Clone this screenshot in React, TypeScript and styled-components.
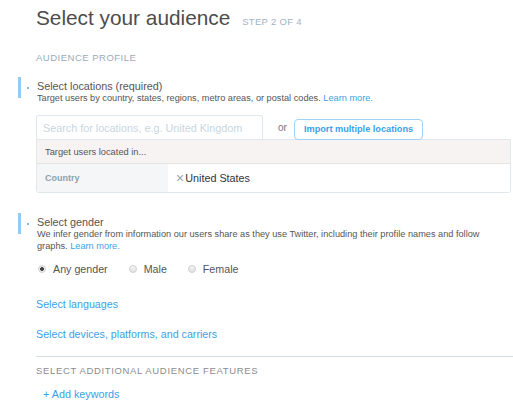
import React from "react";
import styled, { createGlobalStyle } from "styled-components";

const GlobalStyle = createGlobalStyle`
  html, body {
    margin: 0;
    padding: 0;
    background: #ffffff;
  }
  body {
    font-family: "Liberation Sans", Arial, sans-serif;
    color: #555555;
  }
`;

const BLUE = "#3b9fe8";

const App = () => {
  return (
    <>
      <GlobalStyle />
      <S.Page>
        <S.Header>
          <S.Title>Select your audience</S.Title>
          <S.Step>Step 2 of 4</S.Step>
        </S.Header>

        <S.GroupLabel $tone="blue">Audience profile</S.GroupLabel>

        <S.SectionHead>
          <S.Bar />
          <S.Bullet />
          <S.HeadText>
            <S.HeadTitle>Select locations (required)</S.HeadTitle>
            <S.HeadDesc>
              Target users by country, states, regions, metro areas, or postal codes.{" "}
              <S.InlineLink href="#">Learn more.</S.InlineLink>
            </S.HeadDesc>
          </S.HeadText>
        </S.SectionHead>

        <S.LocationBlock>
          <S.SearchRow>
            <S.SearchInput placeholder="Search for locations, e.g. United Kingdom" />
            <S.Or>or</S.Or>
            <S.ImportButton>Import multiple locations</S.ImportButton>
          </S.SearchRow>
          <S.Table>
            <S.TableCaption>Target users located in...</S.TableCaption>
            <S.TableRow>
              <S.KeyCell>Country</S.KeyCell>
              <S.ValueCell>
                <S.Remove>×</S.Remove>
                United States
              </S.ValueCell>
            </S.TableRow>
          </S.Table>
        </S.LocationBlock>

        <S.SectionHead $gap={20}>
          <S.Bar />
          <S.Bullet />
          <S.HeadText>
            <S.HeadTitle>Select gender</S.HeadTitle>
            <S.HeadDesc>
              We infer gender from information our users share as they use Twitter, including
              their profile names and follow graphs.{" "}
              <S.InlineLink href="#">Learn more.</S.InlineLink>
            </S.HeadDesc>
          </S.HeadText>
        </S.SectionHead>

        <S.RadioRow>
          {["Any gender", "Male", "Female"].map((label, i) => (
            <S.RadioItem key={label}>
              <S.RadioDot $checked={i === 0} />
              {label}
            </S.RadioItem>
          ))}
        </S.RadioRow>

        <S.TextLink href="#" $gap={21}>Select languages</S.TextLink>
        <S.TextLink href="#" $gap={16}>Select devices, platforms, and carriers</S.TextLink>

        <S.Rule />

        <S.GroupLabel $tone="gray" $gap={8}>Select additional audience features</S.GroupLabel>
        <S.AddLink href="#">+ Add keywords</S.AddLink>
      </S.Page>
    </>
  );
};

export default App;

const S = {
  Page: styled.div`
    width: 513px;
    height: 416px;
    overflow: hidden;
    padding-top: 6px;
    box-sizing: border-box;
  `,
  Header: styled.div`
    display: flex;
    align-items: baseline;
    padding-left: 36px;
    height: 24px;
  `,
  Title: styled.h1`
    margin: 0;
    font-size: 20.8px;
    line-height: 24px;
    font-weight: normal;
    color: #4d4d4d;
  `,
  Step: styled.span`
    margin-left: 12px;
    font-size: 9.5px;
    text-transform: uppercase;
    letter-spacing: 0.3px;
    color: #9fb3c2;
  `,
  GroupLabel: styled.div<{ $tone: "blue" | "gray"; $gap?: number }>`
    margin-top: ${(p) => (p.$gap ?? 22)}px;
    padding-left: 36px;
    font-size: 9.5px;
    line-height: 12px;
    text-transform: uppercase;
    letter-spacing: ${(p) => (p.$tone === "blue" ? 0.5 : 0.65)}px;
    color: ${(p) => (p.$tone === "blue" ? "#9aabb8" : "#8c8c8c")};
  `,
  SectionHead: styled.div<{ $gap?: number }>`
    display: flex;
    align-items: flex-start;
    margin-top: ${(p) => (p.$gap ?? 13)}px;
  `,
  Bar: styled.div`
    margin-left: 18px;
    width: 3px;
    height: 21px;
    background: #8fcdf5;
    flex: none;
  `,
  Bullet: styled.div`
    width: 16px;
    height: 21px;
    flex: none;
    display: flex;
    align-items: center;
    &::after {
      content: "";
      margin-left: 6px;
      width: 2px;
      height: 2px;
      background: #7fbfea;
    }
  `,
  HeadText: styled.div`
    padding-top: 3px;
    width: 468px;
  `,
  HeadTitle: styled.div`
    font-size: 10.8px;
    line-height: 12px;
    color: #555555;
  `,
  HeadDesc: styled.div`
    font-size: 9.2px;
    line-height: 12px;
    color: #555555;
  `,
  InlineLink: styled.a`
    color: ${BLUE};
    text-decoration: none;
  `,
  LocationBlock: styled.div`
    margin: 11px 2px 0 36px;
  `,
  SearchRow: styled.div`
    display: flex;
    align-items: center;
    height: 24px;
  `,
  SearchInput: styled.input`
    box-sizing: border-box;
    width: 227px;
    height: 24px;
    margin: 0;
    border: 1px solid #e1e8ed;
    border-bottom: none;
    border-radius: 3px 3px 0 0;
    padding: 0 6px;
    font-family: inherit;
    font-size: 10.8px;
    color: #555555;
    outline: none;
    &::placeholder {
      color: #c8d6e0;
    }
  `,
  Or: styled.span`
    margin: 0 7px 0 15px;
    font-size: 10px;
    color: #777777;
  `,
  ImportButton: styled.button`
    box-sizing: border-box;
    height: 21px;
    margin-top: 4px;
    padding: 0 9px;
    border: 1px solid #9fd3f6;
    border-radius: 4px;
    background: #ffffff;
    font-family: inherit;
    font-size: 9.2px;
    font-weight: bold;
    color: ${BLUE};
  `,
  Table: styled.div`
    border: 1px solid #e1e8ed;
    border-radius: 0 0 3px 3px;
  `,
  TableCaption: styled.div`
    height: 23px;
    display: flex;
    align-items: center;
    padding-left: 8px;
    background: #f7f3f2;
    border-bottom: 1px solid #e3e3e3;
    font-size: 9.3px;
    color: #555555;
  `,
  TableRow: styled.div`
    display: flex;
    height: 28px;
  `,
  KeyCell: styled.div`
    width: 131px;
    display: flex;
    align-items: center;
    padding-left: 8px;
    box-sizing: border-box;
    background: #f5f6f7;
    font-size: 9px;
    font-weight: bold;
    color: #8ea0ae;
  `,
  ValueCell: styled.div`
    flex: 1;
    display: flex;
    align-items: center;
    padding-left: 8px;
    font-size: 10.8px;
    color: #333333;
    background: #ffffff;
  `,
  Remove: styled.span`
    margin-right: 1px;
    font-size: 14px;
    color: #9aa6b0;
  `,
  RadioRow: styled.div`
    display: flex;
    align-items: center;
    margin-top: 10px;
    padding-left: 38px;
    height: 14px;
  `,
  RadioItem: styled.label`
    display: flex;
    align-items: center;
    margin-right: 21px;
    font-size: 10.7px;
    color: #555555;
  `,
  RadioDot: styled.span<{ $checked?: boolean }>`
    box-sizing: border-box;
    width: 8px;
    height: 8px;
    margin-right: 7px;
    border-radius: 50%;
    border: 1px solid #d0d0d0;
    background: ${(p) =>
      p.$checked
        ? "radial-gradient(circle, #444 0 1.6px, #f0f0f0 2.2px)"
        : "linear-gradient(#f4f4f4, #e2e2e2)"};
  `,
  TextLink: styled.a<{ $gap: number }>`
    display: block;
    margin-top: ${(p) => p.$gap}px;
    margin-left: 36px;
    font-size: 10.7px;
    line-height: 14px;
    color: ${BLUE};
    text-decoration: none;
  `,
  Rule: styled.div`
    margin: 15px 0 0 36px;
    height: 1px;
    background: #d6dde2;
  `,
  AddLink: styled.a`
    display: block;
    margin: 10px 0 0 43px;
    font-size: 10.8px;
    line-height: 14px;
    color: ${BLUE};
    text-decoration: none;
  `,
};
